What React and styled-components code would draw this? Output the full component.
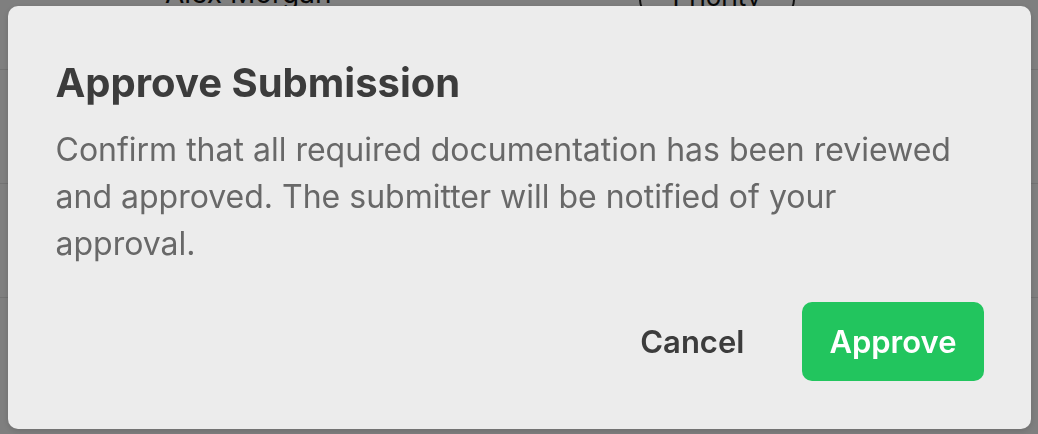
import React from "react";
import styled, { createGlobalStyle } from "styled-components";

const GlobalStyle = createGlobalStyle`
  html, body {
    margin: 0;
    padding: 0;
    background: #ffffff;
    font-family: Inter, "Noto Sans", "Liberation Sans", sans-serif;
    overflow: hidden;
  }
`;

const Page = styled.div`
  height: 434px;
  margin-top: -44px;
`;

const Row = styled.div`
  display: grid;
  grid-template-columns: 474px 156px;
  align-items: start;
  box-sizing: border-box;
  height: 114px;
  padding: 20px 0 0 165px;
  border-bottom: 1px solid #e6e6e6;
  font-size: 28px;
  line-height: 34px;
  color: #111;
`;

const Pill = styled.span`
  box-sizing: border-box;
  border: 2px solid #222;
  border-radius: 999px;
  text-align: center;
  font-size: 26px;
  line-height: 34px;
  height: 46px;
  padding-top: 2px;
`;

const Overlay = styled.div`
  position: fixed;
  inset: 0;
  background: rgba(0, 0, 0, 0.5);
  display: flex;
  align-items: center;
  justify-content: center;
`;

const Dialog = styled.div`
  width: 1023px;
  box-sizing: border-box;
  background: #ececec;
  border-radius: 10px;
  padding: 48px 47px 48px 48px;
  box-shadow: 0 2px 6px rgba(0, 0, 0, 0.15);
  display: flex;
  flex-direction: column;
`;

const Title = styled.h2`
  margin: 0;
  font-size: 40px;
  line-height: 58px;
  font-weight: 700;
  color: #3c3c3c;
`;

const Description = styled.p`
  margin: 14px 0 0;
  max-width: 905px;
  font-size: 32px;
  line-height: 47px;
  color: #686868;
`;

const Footer = styled.div`
  display: flex;
  justify-content: flex-end;
  gap: 31px;
  margin-top: 35px;
`;

const Button = styled.button`
  height: 79px;
  padding: 0 27px;
  border: none;
  border-radius: 10px;
  font-family: inherit;
  font-size: 31px;
  font-weight: 600;
  cursor: pointer;
  background: ${(p) => (p.primary ? "#22c55e" : "transparent")};
  color: ${(p) => (p.primary ? "#ffffff" : "#3c3c3c")};
`;

const App = () => {
  return (
    <>
      <GlobalStyle />
      <Page>
        <Row>
          <span>Alex Morgan</span>
          <Pill>Priority</Pill>
        </Row>
        <Row />
        <Row />
        <Row />
      </Page>
      <Overlay>
        <Dialog role="alertdialog">
          <Title>Approve Submission</Title>
          <Description>
            Confirm that all required documentation has been reviewed and
            approved. The submitter will be notified of your approval.
          </Description>
          <Footer>
            <Button>Cancel</Button>
            <Button primary>Approve</Button>
          </Footer>
        </Dialog>
      </Overlay>
    </>
  );
};

export default App;
